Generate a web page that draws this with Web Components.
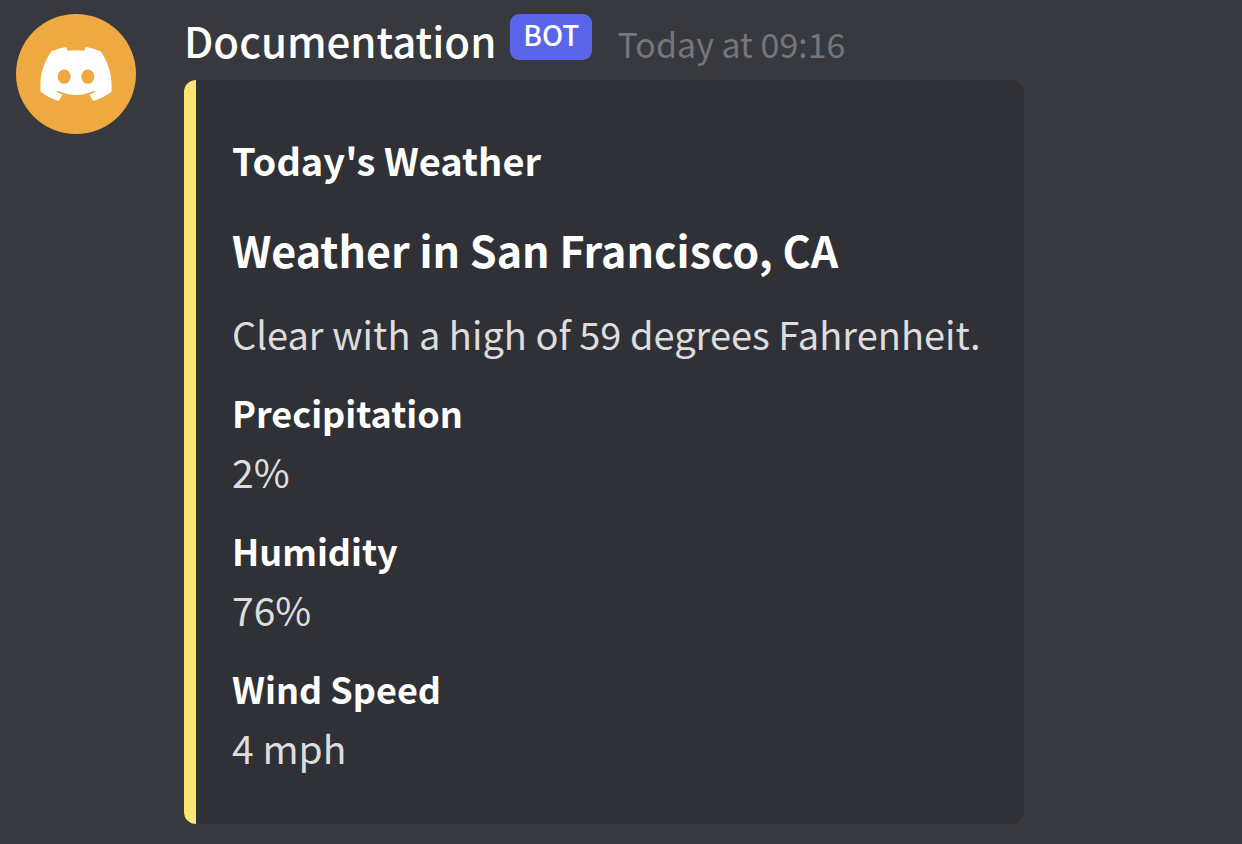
<!DOCTYPE html>
<html lang="en">
<head>
<meta charset="utf-8">
<title>Documentation bot</title>
<style>
html{background:#38393e}
body{margin:0;font-family:"Noto Sans CJK SC","Noto Sans",sans-serif;color:#dcddde}
</style>
</head>
<body>
<chat-message author="Documentation" time="Today at 09:16">
  <message-embed>
    <span slot="author">Today's Weather</span>
    <span slot="title">Weather in San Francisco, CA</span>
    <span slot="description">Clear with a high of 59 degrees Fahrenheit.</span>
    <embed-field name="Precipitation">2%</embed-field>
    <embed-field name="Humidity">76%</embed-field>
    <embed-field name="Wind Speed">4 mph</embed-field>
  </message-embed>
</chat-message>
<script>
function define(name, html, setup) {
  const template = document.createElement('template');
  template.innerHTML = html;
  customElements.define(name, class extends HTMLElement {
    constructor() {
      super();
      this.attachShadow({mode: 'open'}).append(template.content.cloneNode(true));
    }
    connectedCallback() { if (setup) setup(this, this.shadowRoot); }
  });
}

define('user-avatar', `
<style>
:host{display:grid;place-items:center;width:120px;height:120px;border-radius:50%;background:#eea941;flex:none}
svg{display:block;width:72px;height:54px}
</style>
<svg viewBox="0 0 127.14 96.36" fill="#fff" aria-hidden="true"><path d="M107.7,8.07A105.15,105.15,0,0,0,81.47,0a72.06,72.06,0,0,0-3.36,6.83A97.68,97.68,0,0,0,49,6.83,72.37,72.37,0,0,0,45.64,0,105.89,105.89,0,0,0,19.39,8.09C2.79,32.65-1.71,56.6.54,80.21h0A105.73,105.73,0,0,0,32.71,96.36L39.6,85.25a68.42,68.42,0,0,1-10.85-5.18L31.41,78.07a75.57,75.57,0,0,0,64.32,0L98.39,80.07a68.68,68.68,0,0,1-10.87,5.19L94.41,96.36A105.25,105.25,0,0,0,126.6,80.22h0C129.24,52.84,122.09,29.11,107.7,8.07ZM42.45,65.69C36.18,65.69,31,60,31,53s5-12.74,11.43-12.74S54,46,53.89,53,48.84,65.69,42.45,65.69Zm42.24,0C78.41,65.69,73.25,60,73.25,53s5-12.74,11.44-12.74S96.23,46,96.12,53,91.08,65.69,84.69,65.69Z"/></svg>`);

define('bot-tag', `
<style>
:host{display:block;background:#5b65ea;color:#fff;border-radius:9px;padding:0 13px 6px;font-size:28px;font-weight:500;line-height:40px}
</style><slot></slot>`);

define('chat-message', `
<style>
:host{display:flex;align-items:flex-start;gap:48px;padding:14px 16px 16px}
.body{flex:1;min-width:0}
header{display:flex;align-items:flex-start;height:66px}
.name{margin:0;font-size:42px;line-height:52px;font-weight:500;color:#fff}
bot-tag{margin-left:14px}
time{margin-left:25px;font-size:34px;line-height:60px;color:#72767d}
</style>
<user-avatar></user-avatar>
<div class="body">
  <header><h2 class="name"></h2><bot-tag>BOT</bot-tag><time></time></header>
  <slot></slot>
</div>`, (el, root) => {
  root.querySelector('.name').textContent = el.getAttribute('author');
  root.querySelector('time').textContent = el.getAttribute('time');
});

define('message-embed', `
<style>
:host{display:block;box-sizing:border-box;max-width:840px;background:#303136;border-left:12px solid #fae572;border-radius:12px;padding:48px 36px 45px}
h3,h4,p{margin:0}
h3,h4{color:#fff;font-weight:700}
h3{font-size:38px;line-height:64px}
h4{font-size:43px;line-height:60px;margin-top:27px}
p{font-size:38px;line-height:54px;margin-top:28px}
.fields{display:grid;gap:20px;margin-top:24px}
</style>
<article>
<h3><slot name="author"></slot></h3>
<h4><slot name="title"></slot></h4>
<p><slot name="description"></slot></p>
<div class="fields"><slot></slot></div>
</article>`);

define('embed-field', `
<style>
:host{display:block}
h5,p{margin:0}
h5{color:#fff;font-size:36px;font-weight:700;line-height:54px}
p{font-size:39px;line-height:64px}
</style>
<h5></h5><p><slot></slot></p>`, (el, root) => {
  root.querySelector('h5').textContent = el.getAttribute('name');
});
</script>
</body>
</html>
